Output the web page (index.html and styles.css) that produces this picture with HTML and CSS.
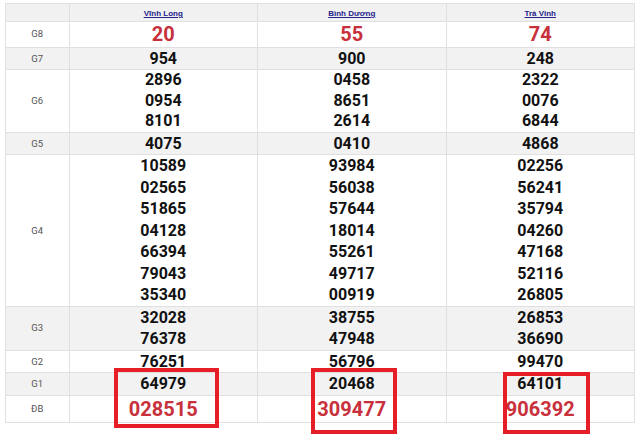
FILE: index.html
```html
<!DOCTYPE html>
<html lang="vi">
<head>
<meta charset="utf-8">
<title>Kết quả xổ số</title>
<link rel="stylesheet" href="styles.css">
</head>
<body>
<div class="wrap">
  <table class="kq">
    <colgroup><col class="c-label"><col class="c-prov"><col class="c-prov"><col class="c-prov"></colgroup>
    <thead>
      <tr class="head"><th></th><th><a href="#">Vĩnh Long</a></th><th><a href="#">Bình Dương</a></th><th><a href="#">Trà Vinh</a></th></tr>
    </thead>
    <tbody>
      <tr class="g8"><td class="lbl">G8</td><td class="red">20</td><td class="red">55</td><td class="red">74</td></tr>
      <tr class="alt"><td class="lbl">G7</td><td>954</td><td>900</td><td>248</td></tr>
      <tr class="g6"><td class="lbl">G6</td>
        <td><div>2896</div><div>0954</div><div>8101</div></td>
        <td><div>0458</div><div>8651</div><div>2614</div></td>
        <td><div>2322</div><div>0076</div><div>6844</div></td></tr>
      <tr class="alt"><td class="lbl">G5</td><td>4075</td><td>0410</td><td>4868</td></tr>
      <tr class="g4"><td class="lbl">G4</td>
        <td><div>10589</div><div>02565</div><div>51865</div><div>04128</div><div>66394</div><div>79043</div><div>35340</div></td>
        <td><div>93984</div><div>56038</div><div>57644</div><div>18014</div><div>55261</div><div>49717</div><div>00919</div></td>
        <td><div>02256</div><div>56241</div><div>35794</div><div>04260</div><div>47168</div><div>52116</div><div>26805</div></td></tr>
      <tr class="alt"><td class="lbl">G3</td>
        <td><div>32028</div><div>76378</div></td>
        <td><div>38755</div><div>47948</div></td>
        <td><div>26853</div><div>36690</div></td></tr>
      <tr><td class="lbl">G2</td><td>76251</td><td>56796</td><td>99470</td></tr>
      <tr class="alt"><td class="lbl">G1</td><td>64979</td><td>20468</td><td>64101</td></tr>
      <tr class="db"><td class="lbl">ĐB</td><td class="red">028515</td><td class="red">309477</td><td class="red">906392</td></tr>
    </tbody>
  </table>
  <div class="mark m1"></div>
  <div class="mark m2"></div>
  <div class="mark m3"></div>
</div>
</body>
</html>
```

FILE: styles.css
```css
html, body {
  margin: 0;
  padding: 0;
  background: #ffffff;
  overflow: hidden;
}
.wrap {
  position: relative;
  width: 640px;
  height: 434px;
  padding-top: 3px;
  box-sizing: border-box;
}
.kq {
  margin-left: 5px;
  width: 629px;
  table-layout: fixed;
  border-collapse: collapse;
  font-family: Roboto, "Liberation Sans", sans-serif;
}
.c-label { width: 63.5px; }
.c-prov { width: 188.5px; }
.kq th, .kq td {
  border: 1px solid #e0e0e0;
  padding: 0;
  text-align: center;
  vertical-align: middle;
}
.head th {
  background: #f1f1f1;
  height: 15px;
  line-height: 14px;
}
.head a {
  font-family: "Liberation Sans", Arial, sans-serif;
  font-size: 8px;
  font-weight: bold;
  color: #23238c;
  text-decoration: underline;
}
.kq td {
  font-size: 16px;
  font-weight: bold;
  color: #111;
  line-height: 21.5px;
}
.g6 td { line-height: 20.5px; }
.kq td.lbl {
  font-size: 9.5px;
  font-weight: normal;
  color: #555;
}
.alt td { background: #f2f2f2; }
.g8 td { line-height: 24.5px; }
.g8 td.red { font-size: 20px; }
.db td { line-height: 26px; }
.db td.red { font-size: 20px; }
.kq td.red { color: #c8313c; }
.mark {
  position: absolute;
  border: 4px solid #e61e27;
  box-sizing: border-box;
}
.m1 { left: 114px; top: 368px; width: 105px; height: 60px; }
.m2 { left: 311px; top: 368px; width: 86px; height: 66px; }
.m3 { left: 503px; top: 372px; width: 87px; height: 62px; }
```
